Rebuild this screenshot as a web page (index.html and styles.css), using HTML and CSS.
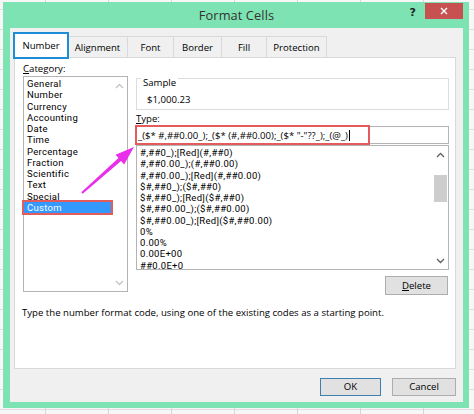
FILE: index.html
```html
<!DOCTYPE html>
<html>
<head>
<meta charset="utf-8">
<title>Format Cells</title>
<link rel="stylesheet" href="styles.css">
</head>
<body>
<div class="window">
  <div class="titlebar">
    <div class="title">Format Cells</div>
    <div class="controls">
      <div class="help">?</div>
      <div class="close"><svg width="8" height="8" viewBox="0 0 8 8"><path d="M1 1L7 7M7 1L1 7" stroke="#fff" stroke-width="1.4" fill="none"/></svg></div>
    </div>
  </div>
  <div class="client">
    <div class="tabs">
      <div class="tab active t-number">Number</div>
      <div class="tab t-align">Alignment</div>
      <div class="tab t-font">Font</div>
      <div class="tab t-border">Border</div>
      <div class="tab t-fill">Fill</div>
      <div class="tab t-prot">Protection</div>
    </div>
    <div class="panel">
      <div class="cols">
        <div class="catcol">
          <div class="label"><u>C</u>ategory:</div>
          <div class="catlist">
            <div class="items">
              <div class="item">General</div>
              <div class="item">Number</div>
              <div class="item">Currency</div>
              <div class="item">Accounting</div>
              <div class="item">Date</div>
              <div class="item">Time</div>
              <div class="item">Percentage</div>
              <div class="item">Fraction</div>
              <div class="item">Scientific</div>
              <div class="item">Text</div>
              <div class="item">Special</div>
              <div class="item selected">Custom</div>
            </div>
            <div class="vscroll disabled">
              <div class="sbtn"><svg width="9" height="6" viewBox="0 0 9 6"><polyline points="1,5 4.5,1.5 8,5" fill="none" stroke="currentColor" stroke-width="1.3"/></svg></div>
              <div class="sbtn"><svg width="9" height="6" viewBox="0 0 9 6"><polyline points="1,1 4.5,4.5 8,1" fill="none" stroke="currentColor" stroke-width="1.3"/></svg></div>
            </div>
          </div>
        </div>
        <div class="rightcol">
          <div class="sample">
            <span class="legend">Sample</span>
            <div class="sample-value">$1,000.23</div>
          </div>
          <div class="label type-label"><u>T</u>ype:</div>
          <div class="typebox">
            <span class="typetext">_($* #,##0.00_);_($* (#,##0.00);_($* "-"??_);_(@_)</span><span class="caret"></span>
            <div class="mark-red"></div>
          </div>
          <div class="codelist">
            <div class="items">
              <div class="item">#,##0_);[Red](#,##0)</div>
              <div class="item">#,##0.00_);(#,##0.00)</div>
              <div class="item">#,##0.00_);[Red](#,##0.00)</div>
              <div class="item">$#,##0_);($#,##0)</div>
              <div class="item">$#,##0_);[Red]($#,##0)</div>
              <div class="item">$#,##0.00_);($#,##0.00)</div>
              <div class="item">$#,##0.00_);[Red]($#,##0.00)</div>
              <div class="item">0%</div>
              <div class="item">0.00%</div>
              <div class="item">0.00E+00</div>
              <div class="item">##0.0E+0</div>
            </div>
            <div class="vscroll">
              <div class="sbtn"><svg width="9" height="6" viewBox="0 0 9 6"><polyline points="1,5 4.5,1.5 8,5" fill="none" stroke="currentColor" stroke-width="1.3"/></svg></div>
              <div class="track"><div class="thumb"></div></div>
              <div class="sbtn"><svg width="9" height="6" viewBox="0 0 9 6"><polyline points="1,1 4.5,4.5 8,1" fill="none" stroke="currentColor" stroke-width="1.3"/></svg></div>
            </div>
          </div>
          <div class="delrow"><button class="btn del"><u>D</u>elete</button></div>
        </div>
      </div>
      <p class="desc">Type the number format code, using one of the existing codes as a starting point.</p>
    </div>
    <div class="buttons">
      <button class="btn ok">OK</button>
      <button class="btn cancel">Cancel</button>
    </div>
  </div>
</div>
<svg class="arrow" width="474" height="414" viewBox="0 0 474 414">
  <polygon points="81.3,192.3 118.5,158.1 115.5,154.7 134,147 124.1,164.5 121.1,161.1 82.7,193.7" fill="#ea2fea"/>
</svg>
</body>
</html>
```

FILE: styles.css
```css
* { box-sizing: border-box; }
html, body { margin: 0; }
body {
  width: 474px;
  height: 414px;
  overflow: hidden;
  position: relative;
  padding: 2px 0 0 3px;
  font-family: "Open Sans", "Noto Sans", sans-serif;
  font-size: 9.6px;
  color: #000;
  background-color: #f7f7f7;
  background-image:
    linear-gradient(to right, #d6d6d6 1px, transparent 1px),
    linear-gradient(to bottom, #dedede 1px, transparent 1px);
  background-size: 63px 20px, 63px 20px;
  background-position: 45px 0, 0 9px;
}

.window {
  width: 466px;
  height: 406px;
  background: #7ee3b2;
  padding: 0 6px 6px 7px;
  display: flex;
  flex-direction: column;
}

.titlebar {
  height: 26px;
  display: grid;
  grid-template-columns: 1fr auto 1fr;
  align-items: center;
}
.title {
  grid-column: 2;
  font-size: 12.8px;
  color: #333;
  letter-spacing: 0.1px;
}
.controls {
  grid-column: 3;
  justify-self: end;
  align-self: start;
  display: flex;
  align-items: flex-start;
}
.help {
  font-family: "DejaVu Sans", sans-serif;
  font-weight: bold;
  font-size: 11px;
  color: #222;
  margin: 4px 9px 0 0;
  line-height: 14px;
}
.close {
  width: 38px;
  height: 16px;
  margin-top: 1px;
  background: #c75050;
  display: flex;
  align-items: center;
  justify-content: center;
}
.close svg { display: block; }

.client {
  flex: 1;
  background: #f0f0f0;
  padding: 6px 7px 0 4px;
  display: flex;
  flex-direction: column;
}

.tabs {
  height: 23px;
  display: flex;
  align-items: flex-end;
}
.tab {
  height: 21px;
  border: 1px solid #d9d9d9;
  border-bottom: 0;
  margin-left: -1px;
  background: #f0f0f0;
  display: flex;
  align-items: center;
  justify-content: center;
  padding-top: 1px;
}
.tab.active {
  margin-left: 0;
  height: 25px;
  margin-bottom: -1px;
  background: #fff;
  position: relative;
  z-index: 1;
  padding-top: 0;
  padding-bottom: 2px;
  outline: 2px solid #1f8dd6;
  outline-offset: -1px;
}
.t-number { width: 54px; }
.t-align { width: 61px; }
.t-font { width: 47px; }
.t-border { width: 49px; }
.t-fill { width: 46px; }
.t-prot { width: 61px; }

.panel {
  height: 312px;
  border: 1px solid #d9d9d9;
  background: #fff;
  padding: 4px 6px 0 8px;
}
.cols {
  display: flex;
  gap: 8px;
}
.label {
  height: 14px;
  line-height: 14px;
}
.catcol { width: 105px; }

.catlist {
  height: 216px;
  border: 1px solid #b4b4b4;
  display: flex;
}
.items {
  flex: 1;
  padding-top: 1px;
}
.item {
  font-family: Roboto, "Open Sans", sans-serif;
  font-size: 9.5px;
  letter-spacing: 0.3px;
  height: 11.27px;
  line-height: 11.27px;
  padding-left: 3px;
  white-space: nowrap;
}
.item.selected {
  background: #3399ff;
  color: #fff;
  outline: 2px solid #e35b5b;
}

.vscroll {
  width: 16px;
  display: flex;
  flex-direction: column;
  justify-content: space-between;
  color: #606060;
}
.vscroll.disabled { color: #c4c4c4; }
.sbtn {
  height: 17px;
  display: flex;
  align-items: center;
  justify-content: center;
}
.sbtn svg { display: block; }
.track {
  flex: 1;
  padding: 12px 1px 0 1px;
}
.thumb {
  height: 27px;
  background: #cdcdcd;
}

.rightcol {
  flex: 1;
}
.sample {
  margin-top: 16px;
  height: 32px;
  border: 1px solid #dcdcdc;
  padding-left: 4px;
}
.legend {
  display: inline-block;
  background: #fff;
  padding: 0 2px;
  line-height: 12px;
  margin-top: -2px;
  vertical-align: top;
}
.sample-value {
  line-height: 14px;
  margin: 1px 0 0 6px;
}
.type-label { margin-top: 2px; }

.typebox {
  position: relative;
  height: 18px;
  border: 1px solid #b4b4b4;
  padding-left: 1px;
  display: flex;
  align-items: center;
  white-space: nowrap;
}
.caret {
  width: 1px;
  height: 11px;
  background: #000;
  margin-left: 1px;
}
.mark-red {
  position: absolute;
  left: -2px;
  top: -2px;
  width: 235px;
  height: 20px;
  border: 2px solid #e35b5b;
}

.codelist {
  margin-top: 1px;
  height: 125px;
  border: 1px solid #b4b4b4;
  display: flex;
}
.codelist .vscroll { width: 15px; }

.delrow {
  display: flex;
  justify-content: flex-end;
  margin-top: 6px;
  padding-right: 1px;
}
.btn {
  font-family: inherit;
  font-size: inherit;
  color: #000;
  height: 19px;
  background: #e1e1e1;
  border: 1px solid #adadad;
  padding: 0;
  margin: 0;
  line-height: 16px;
}
.del { width: 63px; }

.desc {
  margin: 11px 0 0 -1px;
  line-height: 14px;
}

.buttons {
  display: flex;
  justify-content: flex-end;
  gap: 11px;
  margin-top: 9px;
}
.buttons .btn { height: 18px; }
.ok { width: 61px; border-color: #3c7fb1; }
.cancel { width: 64px; }

.arrow {
  position: absolute;
  left: 0;
  top: 0;
  pointer-events: none;
}
```
